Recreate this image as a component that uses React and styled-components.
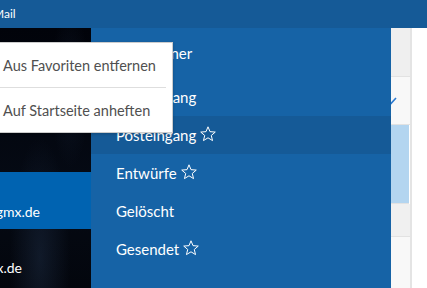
import React from "react";
import styled, { createGlobalStyle } from "styled-components";

const GlobalStyle = createGlobalStyle`
  html, body {
    margin: 0;
    padding: 0;
    background: #ffffff;
  }
  body {
    font-family: Lato, "Open Sans", "Liberation Sans", sans-serif;
  }
`;

const Screen = styled.div`
  position: relative;
  width: 427px;
  height: 288px;
  overflow: hidden;
  display: flex;
  flex-direction: column;
`;

const TitleBar = styled.div`
  height: 28px;
  flex-shrink: 0;
  display: flex;
  align-items: center;
  background: #155a97;
  color: #ffffff;
  font-size: 12px;
  .title {
    margin-left: -7px;
    margin-top: -1px;
  }
`;

const Body = styled.div`
  flex: 1;
  display: flex;
  min-height: 0;
`;

const AccountColumn = styled.div`
  width: 91px;
  flex-shrink: 0;
  display: flex;
  flex-direction: column;
  overflow: hidden;
  background:
    radial-gradient(ellipse 30px 120px at 40px 230px, rgba(40, 60, 90, 0.35), transparent),
    radial-gradient(ellipse 20px 80px at 70px 60px, rgba(30, 45, 70, 0.3), transparent),
    linear-gradient(180deg, #01030a 0%, #050a14 60%, #03060d 100%);
`;

const AccountSpacer = styled.div`
  height: ${(p) => p.h}px;
`;

const AccountItem = styled.div`
  height: ${(p) => p.h}px;
  display: flex;
  align-items: flex-end;
  justify-content: flex-end;
  padding-right: ${(p) => p.pr}px;
  padding-bottom: ${(p) => p.pb}px;
  box-sizing: border-box;
  background: ${(p) => (p.active ? "#0063b1" : "transparent")};
  color: #ffffff;
  font-size: 14px;
  white-space: nowrap;
`;

const FolderPanel = styled.div`
  width: 300px;
  flex-shrink: 0;
  background: #1663a6;
  display: flex;
  flex-direction: column;
`;

const PanelHeader = styled.div`
  height: 50px;
  display: flex;
  align-items: center;
  padding-left: 25px;
  color: #ffffff;
  font-size: 15px;
`;

const FolderRow = styled.div`
  height: 38px;
  display: flex;
  align-items: center;
  gap: 4px;
  padding-left: 25px;
  background: ${(p) => (p.hover ? "#155a97" : "transparent")};
  color: #ffffff;
  font-size: 15px;
  svg {
    margin-top: -2px;
  }
`;

const MessageList = styled.div`
  flex: 1;
  display: flex;
  background: #ffffff;
`;

const ListColumn = styled.div`
  width: 19px;
  display: flex;
  flex-direction: column;
  border-right: 2px solid #e4e4e4;
  overflow: hidden;
`;

const ListRow = styled.div`
  height: ${(p) => p.h}px;
  flex-shrink: 0;
  background: ${(p) => p.bg};
  border-bottom: ${(p) => (p.line ? "1px solid #e2e2e2" : "none")};
  margin-right: ${(p) => (p.inset ? 1 : 0)}px;
  display: flex;
  align-items: center;
`;

const ContextMenu = styled.div`
  position: absolute;
  top: 42px;
  left: -10px;
  width: 181px;
  background: #ffffff;
  border: 1px solid #cccccc;
  box-shadow: 0 1px 3px rgba(0, 0, 0, 0.2);
`;

const MenuItem = styled.div`
  height: 44px;
  display: flex;
  align-items: center;
  padding-left: 12px;
  color: #505050;
  font-size: 14.5px;
`;

const MenuSeparator = styled.div`
  height: 1px;
  margin-right: 6px;
  background: #dedede;
`;

const Star = () => (
  <svg width="16" height="16" viewBox="0 0 24 24" fill="none" stroke="#ffffff" strokeWidth="1.5" strokeLinejoin="miter">
    <path d="M12 1.2l3 7.3 7.9.6-6 5.1 1.9 7.7L12 17.7l-6.8 4.2 1.9-7.7-6-5.1 7.9-.6z" />
  </svg>
);

const Check = () => (
  <svg width="10" height="8" viewBox="0 0 10 8" style={{ marginLeft: -4 }}>
    <path d="M1 4.5l2.5 2.5L9 1" fill="none" stroke="#2b7ad0" strokeWidth="1.6" />
  </svg>
);

const folders = [
  { name: "Posteingang", star: true, hover: true },
  { name: "Entwürfe", star: true },
  { name: "Gelöscht", star: false },
  { name: "Gesendet", star: true },
];

export default function App() {
  return (
    <>
      <GlobalStyle />
      <Screen>
        <TitleBar>
          <span className="title">Mail</span>
        </TitleBar>
        <Body>
          <AccountColumn>
            <AccountSpacer h={144} />
            <AccountItem h={57} active pr={51} pb={9}>
              max.mustermann@gmx.de
            </AccountItem>
            <AccountItem h={59} pr={69} pb={12}>
              kontakt@gmx.de
            </AccountItem>
          </AccountColumn>
          <FolderPanel>
            <PanelHeader>Alle Ordner</PanelHeader>
            <FolderRow>Posteingang</FolderRow>
            {folders.map((f) => (
              <FolderRow key={f.name} hover={f.hover}>
                {f.name}
                {f.star && <Star />}
              </FolderRow>
            ))}
          </FolderPanel>
          <MessageList>
            <ListColumn>
              <ListRow h={48} bg="#efefef" line />
              <ListRow h={47} bg="#f8f8f8" line>
                <Check />
              </ListRow>
              <ListRow h={78} bg="#b3d5f0" line inset />
              <ListRow h={32} bg="#f0f0f0" line />
              <ListRow h={60} bg="#f8f8f8" />
            </ListColumn>
          </MessageList>
        </Body>
        <ContextMenu>
          <MenuItem>Aus Favoriten entfernen</MenuItem>
          <MenuSeparator />
          <MenuItem>Auf Startseite anheften</MenuItem>
        </ContextMenu>
      </Screen>
    </>
  );
}
